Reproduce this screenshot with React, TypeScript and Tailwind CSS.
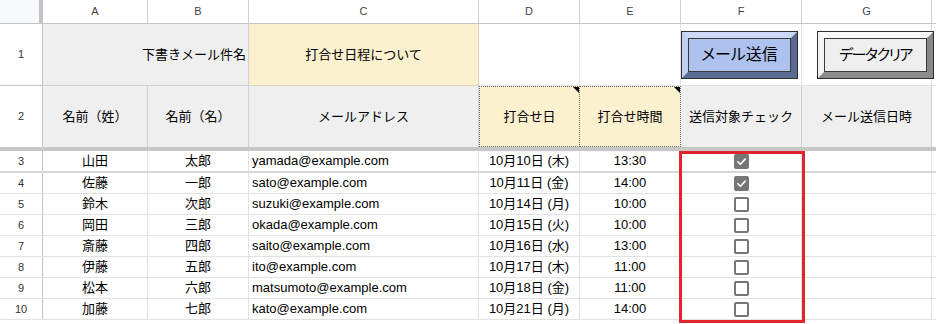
import { Fragment } from 'react';

const rows = [
  { last: '山田', first: '太郎', email: 'yamada@example.com', date: '10月10日 (木)', time: '13:30', checked: true },
  { last: '佐藤', first: '一郎', email: 'sato@example.com', date: '10月11日 (金)', time: '14:00', checked: true },
  { last: '鈴木', first: '次郎', email: 'suzuki@example.com', date: '10月14日 (月)', time: '10:00', checked: false },
  { last: '岡田', first: '三郎', email: 'okada@example.com', date: '10月15日 (火)', time: '10:00', checked: false },
  { last: '斎藤', first: '四郎', email: 'saito@example.com', date: '10月16日 (水)', time: '13:00', checked: false },
  { last: '伊藤', first: '五郎', email: 'ito@example.com', date: '10月17日 (木)', time: '11:00', checked: false },
  { last: '松本', first: '六郎', email: 'matsumoto@example.com', date: '10月18日 (金)', time: '11:00', checked: false },
  { last: '加藤', first: '七郎', email: 'kato@example.com', date: '10月21日 (月)', time: '14:00', checked: false },
];

const grid = 'grid grid-cols-[43px_105px_101px_230px_101px_101px_121px_130px_1fr]';

function Checkbox({ checked }: { checked: boolean }) {
  if (checked) {
    return (
      <div className="flex h-[15px] w-[15px] items-center justify-center rounded-[2px] bg-[#767676]">
        <svg width="11" height="11" viewBox="0 0 12 12" fill="none">
          <path d="M2 6.2 L4.8 9 L10 3.4" stroke="white" strokeWidth="1.7" strokeLinecap="round" strokeLinejoin="round" />
        </svg>
      </div>
    );
  }
  return <div className="h-[15px] w-[15px] rounded-[2px] border-2 border-[#767676]" />;
}

function NoteMark() {
  return (
    <span className="absolute right-0 top-0 h-0 w-0 border-l-[6px] border-t-[6px] border-l-transparent border-t-black" />
  );
}

export default function App() {
  return (
    <div className="relative h-[324px] w-[936px] overflow-hidden bg-white font-['Liberation_Sans','Noto_Sans_CJK_JP',sans-serif] text-[13px] text-black">
      {/* column letters */}
      <div className={`${grid} h-[24px] border-b border-[#c4c4c4] text-[11px] text-[#444]`}>
        <div className="flex">
          <div className="w-[39px] bg-[#f8f9fa]" />
          <div className="w-[4px] bg-[#c4c4c4]" />
        </div>
        {['A', 'B', 'C', 'D', 'E', 'F', 'G'].map((c) => (
          <div key={c} className="flex items-center justify-center border-r border-[#d0d0d0]">
            {c}
          </div>
        ))}
        <div />
      </div>

      {/* row 1 */}
      <div className={`${grid} h-[62px]`}>
        <div className="flex items-center justify-center border-r border-b border-[#c4c4c4] text-[11px] text-[#333]">1</div>
        <div className="col-span-2 flex items-center justify-end border-r border-b border-[#d0d0d0] bg-[#efefef] pr-[2px]">
          下書きメール件名
        </div>
        <div className="flex items-center justify-center border-r border-b border-[#ddd6bd] bg-[#fbf1cf]">打合せ日程について</div>
        <div className="border-r border-b border-[#e2e2e3]" />
        <div className="border-r border-b border-[#e2e2e3]" />
        <div className="border-r border-b border-[#e2e2e3]" />
        <div className="border-r border-b border-[#e2e2e3]" />
        <div className="border-b border-[#e2e2e3]" />
      </div>

      {/* row 2 */}
      <div className={`${grid} h-[61px]`}>
        <div className="flex items-center justify-center border-r border-[#c4c4c4] text-[11px] text-[#333]">2</div>
        <div className="flex items-center justify-center border-r border-[#d0d0d0] bg-[#efefef]">名前（姓）</div>
        <div className="flex items-center justify-center border-r border-[#d0d0d0] bg-[#efefef]">名前（名）</div>
        <div className="flex items-center justify-center border-r border-[#d0d0d0] bg-[#efefef]">メールアドレス</div>
        <div className="relative flex items-center justify-center border border-dotted border-[#666] bg-[#fbf1cf]">
          打合せ日
          <NoteMark />
        </div>
        <div className="relative flex items-center justify-center border-y border-r border-dotted border-[#666] bg-[#fbf1cf]">
          打合せ時間
          <NoteMark />
        </div>
        <div className="flex items-center justify-center border-r border-[#d0d0d0] bg-[#efefef]">送信対象チェック</div>
        <div className="flex items-center justify-center border-r border-[#d0d0d0] bg-[#efefef]">メール送信日時</div>
        <div />
      </div>

      {/* frozen divider */}
      <div className="h-[4px] bg-[#c7c7c7]" />

      {/* data rows */}
      {rows.map((r, i) => (
        <div
          key={r.email}
          className={`${grid} ${i === 0 ? 'h-[22px] border-b-2 border-[#d6d6d6]' : 'h-[21px] border-b border-[#e2e2e3]'}`}
        >
          <Fragment>
            <div className="flex items-center justify-center border-r border-[#c4c4c4] text-[11px] text-[#333]">{i + 3}</div>
            <div className="flex items-center justify-center border-r border-[#e2e2e3]">{r.last}</div>
            <div className="flex items-center justify-center border-r border-[#e2e2e3]">{r.first}</div>
            <div className="flex items-center border-r border-[#e2e2e3] pl-[3px]">{r.email}</div>
            <div className="flex items-center justify-center border-r border-[#e2e2e3]">{r.date}</div>
            <div className="flex items-center justify-center border-r border-[#e2e2e3]">{r.time}</div>
            <div className="flex items-center justify-center border-r border-[#e2e2e3]">
              <Checkbox checked={r.checked} />
            </div>
            <div className="border-r border-[#e2e2e3]" />
            <div />
          </Fragment>
        </div>
      ))}

      {/* floating drawing buttons */}
      <div className="absolute left-[681px] top-[31px] h-[48px] w-[117px] border border-[#2f2f2f]">
        <div className="h-full border-[6px] border-t-[#cdd8f6] border-l-[#c2cff2] border-b-[#5d6c92] border-r-[#5a698e]">
          <div className="flex h-full items-center justify-center border border-[#3a3a3a] bg-[#adc2ee] text-[16px] [font-feature-settings:'palt']">
            メール送信
          </div>
        </div>
      </div>
      <div className="absolute left-[817px] top-[31px] h-[48px] w-[117px] border border-[#2f2f2f]">
        <div className="h-full border-[6px] border-t-[#fafafa] border-l-[#f4f4f4] border-b-[#8c8c8c] border-r-[#888888]">
          <div className="flex h-full items-center justify-center border border-[#3a3a3a] bg-[#efefef] text-[15px] tracking-[-1.5px] [font-feature-settings:'palt']">
            データクリア
          </div>
        </div>
      </div>

      {/* highlight box */}
      <div className="absolute left-[679px] top-[151px] h-[172px] w-[126px] border-[3px] border-[#e0262b]" />
    </div>
  );
}
